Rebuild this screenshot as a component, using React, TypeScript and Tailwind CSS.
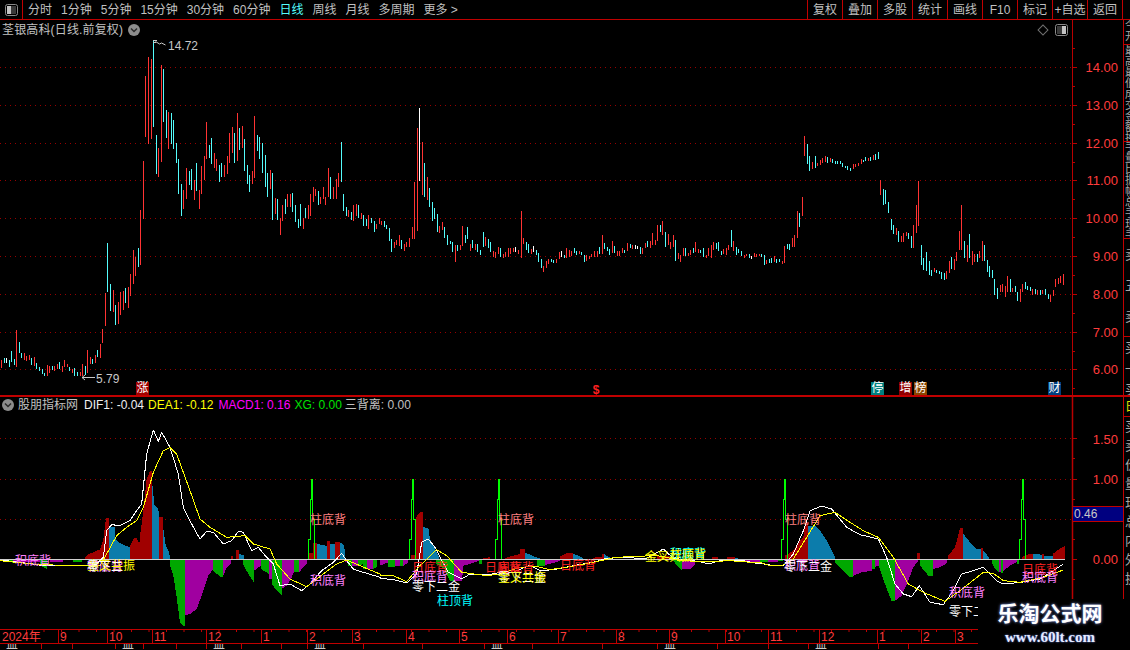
import clsx from 'clsx';

const RED = '#ff3333';
const CYAN = '#54fcfc';
const AXIS = '#b80000';

// candles read off the chart: "x:top-bottom colour", in crop units, with the crop's origin
const candleTables: [number, number, string][] = [
  [0, 130, `3:690-715r 12:685-700c 18:685-700w 27:690-710c 33:663-695c 42:688-705c 48:600-710r 57:636-670c 63:670-685c 72:670-690r 78:678-692r 87:675-690r 93:683-705c 102:682-708r 108:700-716c 117:712-722c 126:718-733c 132:728-738c 141:705-738r 147:708-730r 156:708-720c 162:708-722r 171:702-718r 177:697-718c 186:708-726r 192:690-712r 201:702-712r 207:710-722c 216:716-730r 222:714-738c 231:726-738c 240:726-738r 246:702-738r 255:708-735c 261:660-728r 270:682-702r 276:686-702c 285:675-700r 291:660-682c 300:642-684r 306:598-640r 315:490-588r 321:340-486c 330:462-544c 339:480-545r 345:525-585c 354:515-582r 360:486-555r 369:484-540r 375:474-520c 384:472-534r 390:432-498r 399:360-462r 405:380-438r 414:355-410c 420:240-405r`],
  [130, 35, `40:378-552r 46:123-305r 55:66-327r 64:72-312r 70:15-275c 79:300-417c 85:340-425r 94:90-380r 100:102-260c 109:225-308c 115:232-342r 124:234-327c 130:255-342c 139:324-384c 145:372-477c 154:447-543c 160:465-522r 169:400-492r 178:408-450c 184:402-465c 193:435-495r 199:384-468c 208:465-522r 214:393-477r 223:363-435r 229:261-372r 238:330-370c 244:309-387c 253:354-399r 259:372-408r 268:390-441c 274:384-426c 283:390-426r 292:363-417r 298:294-384r 307:276-354r 313:294-384c 322:234-378r 328:279-345c 337:273-339r 343:312-408c 352:390-447c 358:420-471c 367:408-447r 373:243-429r 382:300-348c 388:306-372c`],
  [250, 105, `37:114-204c 46:150-246c 52:204-276c 61:195-252r 67:204-345c 76:279-327r 82:282-345c 91:339-390r 97:300-348r 106:282-327c 112:267-306r 121:267-306r 127:264-321c 136:300-351c 145:342-369c 151:297-363c 160:339-372r 166:309-339c 175:300-342r 181:267-333r 190:246-291r 196:252-273r 205:258-300c 211:276-297r 220:246-282r 226:276-300r 235:189-276r 241:216-282c 250:246-282r 259:222-282r 265:204-246r 274:111-231c 280:267-318c 289:306-333c 295:315-336r 304:321-345c 310:300-348r 319:297-333r 325:300-339c 334:324-342r 340:330-363c 349:342-363c 355:330-372r 364:339-354c 373:348-381c 379:357-372r 388:339-357r`],
  [380, 100, `3:363-375r 12:363-381c 18:375-387c 27:384-423c 33:417-456c 42:426-444r 48:420-435r 57:405-438r 63:420-447c 72:432-453r 78:426-441r 87:414-441r 96:381-417r 102:246-417r 111:84-393r 117:24-243w 126:126-285r 132:189-291c 141:231-300r 147:264-321c 156:306-363c 162:324-357c 171:342-396c 177:378-399r 186:366-390r 192:381-414c 201:405-435c 210:423-432c 216:426-456c 225:435-486r 231:435-453c 240:435-450r 246:378-438r 255:405-429c 261:381-417c 270:432-453r 276:420-444c 285:432-450r 291:432-456c 300:450-465c 309:396-441c 315:411-438r 324:417-444c 330:426-456c 339:453-471r 345:456-474r 354:441-462r 360:444-471c 369:462-474r 375:456-471r 384:444-471r 390:444-462r 399:444-456r 405:441-456w 414:450-462r 423:333-474r 430:414-432r 438:426-450c 444:432-459c 453:447-462r 459:438-456w 468:450-465c 474:459-486c 483:477-504c 489:498-516r 498:483-504r 504:477-492r 513:477-486c 519:480-489c 528:477-489r 537:456-477r 543:453-471w 552:465-474c 558:444-474r 567:450-471r 573:453-468r 582:444-459c 588:453-465c 597:453-462r 603:456-465c 612:465-486c 618:465-483r 627:468-477r 633:462-471r 642:453-471r 651:453-471r 657:441-462c 666:405-462r 672:429-447c 681:441-453c 687:447-465c 696:423-459r 702:438-459c 711:453-468r 717:453-468r 726:444-459r 732:450-459c 741:429-453r 750:432-444c 757:435-447r 766:435-447w 771:438-447w 780:441-462c 786:444-462r 795:429-444r 801:423-441c 810:423-444r 816:399-435r 825:420-435r 831:375-423r 840:375-396c 846:363-405r 855:396-441c 864:402-435r 870:426-447r 879:405-441r 885:420-483c 894:459-477r 900:465-486r 909:444-468r 915:444-468c 924:459-468r 930:450-465r 939:444-459c 945:426-456r 954:447-459r 960:450-459c 969:444-471c 978:465-474r 984:444-468r 993:435-474r 999:426-450r 1008:429-447c 1014:426-453c 1023:453-465c 1029:447-462r 1038:444-465r 1044:435-450r 1053:390-441c 1059:423-453r 1068:441-465c 1074:447-459c 1083:453-468c 1092:465-474r 1098:462-468r 1107:462-474c 1113:468-477w 1122:459-471r 1128:462-471r 1137:462-468r`],
  [760, 120, `3:402-411c 12:405-435c 18:420-432r 27:417-429c 33:414-429c 42:408-426r 48:417-429c 57:417-426c 66:423-432r 72:378-429r 81:372-387c 87:372-390c 96:354-381r 102:345-381r 111:273-354r 117:279-321c 126:231-288r 133:48-108r 141:72-132c 147:108-153c 156:126-147r 165:108-144c 171:129-138r 180:120-135r 186:114-129r 195:108-126r 201:111-129c 210:114-126r 216:117-129c 225:123-132c 231:123-132c 240:123-132c 246:129-141c 255:138-144c 261:138-150c 270:144-153c 279:132-147r 285:132-141r 294:129-138r 303:117-132r 309:120-126c 315:111-123c 324:114-123r 330:111-123c 339:105-120r 345:102-120c 354:96-117c 361:180-225r 370:207-255c 376:210-252c 385:246-279c 394:297-330c 400:315-342c 409:324-345r 415:333-366c 424:348-366r 430:339-366r 439:336-348r 445:339-357c 454:348-384c 460:315-384r 469:255-339r 475:183-318r 484:375-435c 490:414-450c 499:396-453c 508:423-465c 514:450-468c 523:444-456r 529:450-459c 538:453-462c 544:456-477c 553:459-480c 559:453-477r 568:423-459r 574:411-447c 583:417-450r 589:396-423r 598:333-390r 604:255-390r 613:363-414c 622:375-426r 628:342-414c 637:393-435r 643:402-426r 652:402-426c 658:393-414r 667:363-423r 673:375-423c 682:420-456c 688:438-471c 697:450-474c 703:477-525c 712:504-537c 721:495-516r 727:492-516r 736:498-531r 742:468-516r 751:477-516c 757:504-516r 766:498-516c 772:516-543c 781:507-546r 787:492-516r 796:486-507c 802:498-510c 811:501-513c 817:507-525r 826:507-522c 832:510-525r 841:510-525c 847:510-522r 856:507-525c 865:522-537c 871:525-546r 880:510-528r 886:477-501r 895:474-492r 901:468-489r 910:462-495r`],
];

const candles = candleTables.flatMap(([ox, oy, table]) =>
  table.split(' ').map((item) => {
    const m = item.match(/(\d+):(\d+)-(\d+)(\w)/)!;
    return {
      x: ox + Math.floor(Number(m[1]) / 3),
      top: oy + Number(m[2]) / 3,
      bottom: oy + Number(m[3]) / 3,
      color: m[4] === 'r' ? RED : m[4] === 'c' ? CYAN : '#ffffff',
    };
  })
);

const priceTicks = [
  { y: 67, label: '14.00' },
  { y: 105, label: '13.00' },
  { y: 143, label: '12.00' },
  { y: 180, label: '11.00' },
  { y: 218, label: '10.00' },
  { y: 256, label: '9.00' },
  { y: 294, label: '8.00' },
  { y: 332, label: '7.00' },
  { y: 369, label: '6.00' },
];

const badges = [
  { x: 136, text: '涨', bg: 'bg-[#a00000]' },
  { x: 871, text: '停', bg: 'bg-[#008080]' },
  { x: 899, text: '增', bg: 'bg-[#900000]' },
  { x: 914, text: '榜', bg: 'bg-[#8a4500]' },
  { x: 1048, text: '财', bg: 'bg-[#003f7f]' },
];

const ZERO = 560.5;
const GREEN = '#00a800';
const PURPLE = '#a000a0';
const DARKRED = '#a00000';
const BLUE = '#0c7cab';

// each histogram run: colour, then outline points in crop units (closed back to the zero line)
const histogram: [number, number, [string, string][]][] = [
  [0, 395, [
    [GREEN, '15,503 40,506'], [PURPLE, '40,505 120,505'], [GREEN, '120,515 140,525'], [PURPLE, '150,505 190,503'], [GREEN, '220,503 245,505'],
    [DARKRED, '255,490 265,480 285,473 300,466 310,435 318,373 328,373'],
    [BLUE, '328,400 345,400 346,435 360,447 375,455 390,460'],
    [DARKRED, '390,455 402,432 412,432 413,445 420,445'],
    [DARKRED, '420,427 430,350 440,255 450,232 456,232'],
    [BLUE, '456,262 463,332 470,338 478,355'],
    [DARKRED, '478,370 490,370 490,405'],
    [BLUE, '490,405 497,452 505,470 510,490'],
    [GREEN, '510,515 520,545 530,610 540,685 550,695 555,695'],
    [PURPLE, '555,665 570,660 590,645 605,605 615,575 625,545 640,525'],
    [GREEN, '640,530 660,548 670,550'],
    [PURPLE, '670,545 680,520 692,510'],
    [DARKRED, '692,485 700,485'],
    [DARKRED, '708,468 716,468'],
    [BLUE, '716,480 732,484'],
    [GREEN, '730,512 745,540 762,565'],
    [PURPLE, '762,530 783,515'],
    [GREEN, '783,525 807,540'],
    [PURPLE, '807,555 815,555'],
    [GREEN, '815,570 830,590 845,603'],
    [PURPLE, '845,585 860,575 870,560 882,535'],
    [GREEN, '882,535 897,535'],
    [PURPLE, '897,535 910,520 920,510'],
    [DARKRED, '925,478 938,478'],
    [DARKRED, '940,447 950,447'],
    [BLUE, '950,450 965,452 980,456'],
    [DARKRED, '980,440 990,440'],
    [BLUE, '990,450 1005,450'],
    [DARKRED, '1005,445 1020,445'],
    [BLUE, '1020,447 1030,450 1035,470'],
    [PURPLE, '1035,505 1045,505'], [GREEN, '1045,515 1055,515'], [PURPLE, '1055,515 1073,515'], [GREEN, '1073,515 1090,510'], [GREEN, '1090,525 1100,525'], [PURPLE, '1100,525 1120,525'], [GREEN, '1120,525 1130,520'],
  ]],
  [380, 460, [
    [PURPLE, '0,320 25,310'], [GREEN, '25,325 45,325'], [PURPLE, '45,320 60,320'], [GREEN, '60,322 70,320'], [PURPLE, '70,320 85,310'],
    [DARKRED, '93,288 108,288'],
    [DARKRED, '108,175 120,160 130,160'],
    [BLUE, '130,205 145,207 150,240 165,270 178,295'],
    [GREEN, '168,315 195,330'],
    [GREEN, '195,335 210,365 222,365'],
    [PURPLE, '222,365 245,365 250,330'],
    [PURPLE, '250,320 270,315 297,305'], [GREEN, '297,315 305,315'],
    [DARKRED, '310,297 330,295'],
    [DARKRED, '375,297 400,290 420,285'], [DARKRED, '420,270 435,270'],
    [BLUE, '435,280 460,292 480,298'],
    [GREEN, '470,320 495,320'], [PURPLE, '495,318 520,312 540,306'],
    [DARKRED, '540,292 560,283 580,282'], [BLUE, '580,285 600,292 610,298'],
    [DARKRED, '640,296 665,293'], [DARKRED, '665,285 672,285'], [BLUE, '672,285 690,296'],
    [DARKRED, '830,292 870,292'],
    [GREEN, '880,305 890,320 905,335'], [PURPLE, '905,330 930,330 945,315'],
    [DARKRED, '995,295 1015,295'], [DARKRED, '1040,295 1065,295'],
    [BLUE, '1065,297 1075,298'],
    [PURPLE, '1085,308 1140,308'],
  ]],
  [760, 395, [
    [GREEN, '0,505 25,505'], [PURPLE, '25,505 55,505'], [GREEN, '55,502 70,500'],
    [DARKRED, '75,485 100,470 120,440 130,430 135,390 143,385'],
    [BLUE, '143,395 165,395 180,410 200,440 215,470 225,490'],
    [GREEN, '225,505 250,530 268,548 280,548'],
    [PURPLE, '280,545 305,535 335,530'],
    [GREEN, '335,525 345,525'], [PURPLE, '345,518 358,515'],
    [GREEN, '358,520 375,570 395,622 405,622'],
    [PURPLE, '405,620 425,605 445,560 460,520 475,500'],
    [DARKRED, '471,477 480,477'],
    [GREEN, '480,515 505,545 520,545'],
    [PURPLE, '520,525 540,520 560,508'],
    [DARKRED, '565,485 585,460 600,403 610,403'],
    [BLUE, '610,420 630,445 650,465 662,465'],
    [DARKRED, '662,463 670,463'], [BLUE, '670,470 687,490'],
    [GREEN, '695,505 705,525 718,535'], [GREEN, '722,537 730,537'], [PURPLE, '718,535 722,535'], [PURPLE, '730,530 750,515 770,505'], [GREEN, '770,512 777,510'],
    [DARKRED, '785,490 800,482 820,480'], [BLUE, '820,480 845,482'], [DARKRED, '845,480 852,480'], [BLUE, '852,485 878,487'],
    [DARKRED, '878,480 895,467 915,456'],
  ]],
];

const histPolys = histogram.flatMap(([ox, oy, runs]) =>
  runs.map(([color, raw]) => {
    const pts = raw.split(' ').map((p) => {
      const [a, b] = p.split(',').map(Number);
      return [ox + a / 3, oy + b / 3];
    });
    const outline = [[pts[0][0], ZERO], ...pts, [pts[pts.length - 1][0], ZERO]];
    return { color, points: outline.map((p) => p.join(',')).join(' ') };
  })
);

function toLine(parts: [number, number, string][]) {
  return parts
    .map(([ox, oy, raw]) =>
      raw
        .split(' ')
        .map((p) => {
          const [a, b] = p.split(',').map(Number);
          return `${ox + a / 3},${oy + b / 3}`;
        })
        .join(' ')
    )
    .join(' ');
}

const difLine = toLine([
  [0, 395, '0,498 60,505 100,510 130,515 190,515 250,515 290,510 310,490 320,410 335,392 360,395 390,380 410,350 425,330 440,180 460,108 475,142 485,115 510,160 535,240 550,340 575,390 600,435 620,412 640,415 670,450 695,440 715,412 730,415 755,470 775,460 800,490 820,510 840,575 870,570 905,590 930,570 965,530 1000,505 1025,478 1040,500 1060,525 1090,535 1140,550'],
  [380, 460, '0,358 40,362 80,372 110,345 125,250 145,240 165,265 180,295 205,340 245,360 270,345 320,348 360,340 400,340 450,318 480,335 520,332 590,318 640,310 680,298 720,296 800,298 850,270 880,298 960,308 985,315 1020,305 1090,305 1140,315'],
  [760, 395, '0,508 40,515 70,515 100,480 130,410 150,350 185,336 215,345 260,400 300,422 355,435 380,490 405,570 430,600 455,608 478,575 510,625 550,632 580,590 605,540 640,530 670,520 710,560 730,570 785,565 840,555 880,530 910,510'],
]);

const deaLine = toLine([
  [0, 395, '0,500 100,510 160,513 240,514 300,515 320,480 350,425 380,400 410,380 430,340 460,235 490,170 510,160 530,180 570,290 600,375 630,400 680,430 735,425 760,450 810,465 830,510 870,555 920,578 970,540 1010,510 1040,498 1080,515 1140,540'],
  [380, 460, '0,348 40,350 80,368 120,320 170,272 200,290 245,340 320,350 360,345 420,325 470,322 510,332 590,320 650,308 700,296 760,292 830,290 860,295 900,305 990,308 1050,305 1140,312'],
  [760, 395, '0,505 30,515 70,513 100,495 140,430 180,365 225,355 270,385 310,410 355,430 400,490 445,570 490,595 555,622 600,590 670,535 700,538 730,560 780,565 850,550 910,528'],
]);

const xgSpikes = [311, 412, 498, 784, 1022];

const signals = [
  { x: 15, y: 561, text: '积底背', color: '#ff80ff' },
  { x: 87, y: 567, text: '积底背', color: '#ff80ff' },
  { x: 87, y: 566, text: '金叉共振', color: '#ffff00' },
  { x: 87, y: 567, text: '零下二', color: '#ffffff' },
  { x: 310, y: 520, text: '柱底背', color: '#ff8080' },
  { x: 498, y: 520, text: '柱底背', color: '#ff8080' },
  { x: 785, y: 520, text: '柱底背', color: '#ff8080' },
  { x: 310, y: 581, text: '积底背', color: '#ff80ff' },
  { x: 412, y: 568, text: '日底背', color: '#ff2020' },
  { x: 412, y: 577, text: '积底背', color: '#ff80ff' },
  { x: 412, y: 587, text: '零下二金', color: '#ffffff' },
  { x: 437, y: 601, text: '柱顶背', color: '#00ffff' },
  { x: 485, y: 568, text: '日底背', color: '#ff2020' },
  { x: 498, y: 568, text: '周底背', color: '#ff2020' },
  { x: 498, y: 578, text: '零下二金', color: '#ffffff' },
  { x: 498, y: 578, text: '金叉共振', color: '#ffff00' },
  { x: 560, y: 566, text: '日底背', color: '#ff2020' },
  { x: 645, y: 557, text: '金叉共振', color: '#ffff00' },
  { x: 670, y: 554, text: '积底背', color: '#00ffff' },
  { x: 670, y: 555, text: '柱顶背', color: '#ffff00' },
  { x: 784, y: 566, text: '积底背', color: '#ff80ff' },
  { x: 784, y: 567, text: '零下二金', color: '#ffffff' },
  { x: 949, y: 593, text: '积底背', color: '#ff80ff' },
  { x: 949, y: 612, text: '零下二金', color: '#ffffff' },
  { x: 1022, y: 570, text: '日底背', color: '#ff2020' },
  { x: 1022, y: 578, text: '积底背', color: '#ff80ff' },
];

const months = [
  { x: 58, label: '9' },
  { x: 107, label: '10' },
  { x: 152, label: '11' },
  { x: 206, label: '12' },
  { x: 261, label: '1' },
  { x: 307, label: '2' },
  { x: 352, label: '3' },
  { x: 406, label: '4' },
  { x: 459, label: '5' },
  { x: 507, label: '6' },
  { x: 558, label: '7' },
  { x: 616, label: '8' },
  { x: 669, label: '9' },
  { x: 725, label: '10' },
  { x: 768, label: '11' },
  { x: 819, label: '12' },
  { x: 877, label: '1' },
  { x: 921, label: '2' },
  { x: 955, label: '3' },
];

const bottomCells = [42, 31, 43, 28, 33, 30, 35, 40, 26, 56, 59, 62, 48, 70, 55, 60, 51, 40, 70, 30];

const timeframes = ['分时', '1分钟', '5分钟', '15分钟', '30分钟', '60分钟', '日线', '周线', '月线', '多周期', '更多 >'];
const actions = ['复权', '叠加', '多股', '统计', '画线', 'F10', '标记', '+自选', '返回'];

const stripTop = '今开最高最低成交金额换手量比振幅总手现手外盘内盘均价涨停跌停市盈'.split('');
const stripMid = '卖五卖四卖三'.split('');
const stripLow = '买一买二'.split('');

function SideIcon({ side }: { side: 'left' | 'right' }) {
  return (
    <svg width="13" height="12" viewBox="0 0 13 12" className="block">
      <rect x="0.5" y="0.5" width="12" height="11" rx="2" fill="#000" stroke="#8a8a8a" />
      <rect x={side === 'left' ? 2 : 7} y="2" width="4" height="8" fill="#c4c4c4" />
      <rect x={side === 'left' ? 6 : 2} y="2" width="5" height="8" fill="#3a3a3a" />
    </svg>
  );
}

function ChevronDot() {
  return (
    <svg width="12" height="12" viewBox="0 0 12 12" className="block shrink-0">
      <circle cx="6" cy="6" r="6" fill="#8c8c8c" />
      <path d="M3 4.5 L6 7.5 L9 4.5" fill="none" stroke="#2a2a2a" strokeWidth="1.5" />
    </svg>
  );
}

function DottedGrid({ ys }: { ys: number[] }) {
  return (
    <g>
      {ys.map((y) => (
        <line key={y} x1="0" x2="1072" y1={y + 0.5} y2={y + 0.5} stroke="#960000" strokeDasharray="1 4" shapeRendering="crispEdges" />
      ))}
    </g>
  );
}

function PricePanel() {
  const minor = priceTicks.map((t) => t.y + 19);
  return (
    <div className="relative h-[377px] border-b-2 border-[#c00000]">
      <svg width="1123" height="375" viewBox="0 20 1123 375" className="block">
        <DottedGrid ys={priceTicks.map((t) => t.y)} />
        {candles.map((c, i) => (
          <rect key={i} x={c.x} y={c.top} width="1" height={c.bottom - c.top} fill={c.color} shapeRendering="crispEdges" />
        ))}
        <line x1="1072.5" x2="1072.5" y1="20" y2="396" stroke={AXIS} />
        {priceTicks.map((t) => (
          <g key={t.label}>
            <line x1="1072" x2="1077" y1={t.y + 0.5} y2={t.y + 0.5} stroke={AXIS} />
            <text x="1118" y={t.y + 4.5} textAnchor="end" fontSize="13" fill="#ff3c3c">{t.label}</text>
          </g>
        ))}
        {minor.map((y) => (
          <line key={y} x1="1072" x2="1075" y1={y + 0.5} y2={y + 0.5} stroke={AXIS} />
        ))}
        <line x1="1072" x2="1075" y1="48.5" y2="48.5" stroke={AXIS} />
        {/* high and low markers */}
        <path d="M153 40.5 h4 M153 42.5 h3 M155.5 41.5 l4 2.5 l2 -1 l4 2" fill="none" stroke="#c8c8c8" />
        <text x="168" y="50" fontSize="12" fill="#c8c8c8">14.72</text>
        <path d="M95 377.5 h-13 M85 375 l-3 2.5 l3 2.5" fill="none" stroke="#c8c8c8" />
        <text x="96" y="383" fontSize="12" fill="#c8c8c8">5.79</text>
        <text x="596" y="394" textAnchor="middle" fontSize="12" fontWeight="700" fill="#ff2020">$</text>
      </svg>

      <div className="absolute left-[2px] top-[3px] flex items-center gap-[5px] text-[12px] leading-[14px] tracking-[0.15px] text-[#c0c0c0]">
        <span>荃银高科(日线.前复权)</span>
        <ChevronDot />
      </div>
      <div className="absolute left-[1039px] top-[4px] flex items-center gap-[8px]">
        <span className="block h-[8px] w-[8px] rotate-45 border border-[#707070]" />
        <SideIcon side="right" />
      </div>
      {badges.map((b) => (
        <span
          key={b.x}
          style={{ left: b.x }}
          className={clsx('absolute top-[362px] h-[13px] w-[13px] text-center text-[12px] leading-[13px] text-white', b.bg)}
        >
          {b.text}
        </span>
      ))}
    </div>
  );
}

function IndicatorPanel() {
  return (
    <div className="relative h-[232px]">
      <svg width="1123" height="232" viewBox="0 398 1123 232" className="block">
        <DottedGrid ys={[439, 480, 520]} />
        {histPolys.map((p, i) => (
          <polygon key={i} points={p.points} fill={p.color} shapeRendering="crispEdges" />
        ))}
        <line x1="0" x2="1065" y1="560.5" y2="560.5" stroke="#d0d0d0" shapeRendering="crispEdges" />
        {xgSpikes.map((x) => (
          <polyline
            key={x}
            points={`${x - 2.5},560 ${x - 2.5},540 ${x - 0.5},540 ${x - 0.5},500 ${x + 0.5},500 ${x + 0.5},480 ${x + 1.5},480 ${x + 1.5},520 ${x + 3.5},520 ${x + 3.5},560`}
            fill="none"
            stroke="#00ff00"
            shapeRendering="crispEdges"
          />
        ))}
        <polyline points={difLine} fill="none" stroke="#ffffff" strokeLinejoin="bevel" shapeRendering="crispEdges" />
        <polyline points={deaLine} fill="none" stroke="#ffff00" strokeLinejoin="bevel" shapeRendering="crispEdges" />
        {signals.map((s, i) => (
          <text key={i} x={s.x} y={s.y + 4.5} fontSize="12" fill={s.color}>{s.text}</text>
        ))}
        <line x1="1072.5" x2="1072.5" y1="398" y2="630" stroke={AXIS} strokeWidth="1.5" />
        {[439, 480, 520, 560].map((y) => (
          <line key={y} x1="1072" x2="1077" y1={y + 0.5} y2={y + 0.5} stroke={AXIS} />
        ))}
        {[459, 500, 540, 580].map((y) => (
          <line key={y} x1="1072" x2="1075" y1={y + 0.5} y2={y + 0.5} stroke={AXIS} />
        ))}
        <text x="1118" y="444.5" textAnchor="end" fontSize="13" fill="#ff3c3c">1.50</text>
        <text x="1118" y="485" textAnchor="end" fontSize="13" fill="#ff3c3c">1.00</text>
        <text x="1118" y="565" textAnchor="end" fontSize="13" fill="#ff3c3c">0.00</text>
      </svg>

      <div className="absolute left-[2px] top-[1px] flex h-[14px] items-center whitespace-nowrap text-[12px] leading-[14px] text-[#c0c0c0]">
        <ChevronDot />
        <span className="ml-[4px]">股朋指标网</span>
        <span className="ml-[6px] text-[#f0f0f0]">DIF1: -0.04</span>
        <span className="ml-[4px] text-[#ffff00]">DEA1: -0.12</span>
        <span className="ml-[5px] text-[#ff00ff]">MACD1: 0.16</span>
        <span className="ml-[4px] text-[#00e000]">XG: 0.00</span>
        <span className="ml-[3px]">三背离: 0.00</span>
      </div>
      <div className="absolute left-[1073px] top-[109px] h-[16px] w-[50px] border-y border-[#c00000] bg-[#000080] pl-[1px] text-[12px] leading-[14px] text-[#c8c8c8]">
        0.46
      </div>
    </div>
  );
}

function DateAxis() {
  return (
    <div className="relative h-[15px] border-y border-[#c00000]">
      <span className="absolute left-[2px] top-0 text-[12px] leading-[14px] text-[#ff3c3c]">2024年</span>
      {months.map((m) => (
        <span
          key={m.x}
          style={{ left: m.x }}
          className="absolute top-0 h-[13px] border-l border-[#c00000] pl-[1px] text-[12px] leading-[14px] text-[#ff3c3c]"
        >
          {m.label}
        </span>
      ))}
      <svg width="978" height="3" className="absolute left-0 top-0 block">
        {Array.from({ length: 55 }, (_, i) => (
          <line key={i} x1={26.5 + i * 17.5} x2={26.5 + i * 17.5} y1="0" y2="2" stroke="#c00000" />
        ))}
      </svg>
    </div>
  );
}

function BottomRow() {
  return (
    <div className="flex h-[5px] overflow-hidden">
      {bottomCells.map((w, i) => (
        <div key={i} style={{ width: w }} className="shrink-0 border-r border-[#c00000] pl-[6px] text-[12px] leading-[12px] text-[#c8c8c8]">
          {i % 3 === 0 ? '卌' : ''}
        </div>
      ))}
    </div>
  );
}

function RightStrip() {
  return (
    <div className="flex w-[7px] shrink-0 flex-col overflow-hidden border-l border-[#c00000] text-[11px] leading-[11px] text-[#a8a8a8]">
      <div className="h-[25px] shrink-0 overflow-hidden border-b border-[#c00000] pl-[1px]">
        {stripTop.slice(0, 2).map((ch, i) => (
          <div key={i}>{ch}</div>
        ))}
      </div>
      <div className="h-[97px] shrink-0 overflow-hidden border-b border-[#c00000] pl-[1px]">
        {stripTop.slice(2, 11).map((ch, i) => (
          <div key={i}>{ch}</div>
        ))}
      </div>
      <div className="h-[97px] shrink-0 overflow-hidden border-b border-[#c00000] pl-[1px]">
        {stripTop.slice(11, 20).map((ch, i) => (
          <div key={i}>{ch}</div>
        ))}
      </div>
      <div className="h-[98px] shrink-0 overflow-hidden border-b border-[#c00000] pl-[1px] text-[13px] leading-[31px]">
        {stripMid.slice(0, 3).map((ch, i) => (
          <div key={i}>{ch}</div>
        ))}
      </div>
      <div className="h-[60px] shrink-0 overflow-hidden border-b-2 border-[#c00000] pl-[1px] text-[13px] leading-[21px]">
        {stripLow.slice(0, 3).map((ch, i) => (
          <div key={i}>{ch}</div>
        ))}
      </div>
      <div className="h-[20px] shrink-0 overflow-hidden border-b border-[#c00000] pl-[1px] text-[12px] leading-[20px] text-[#e0e000]">日</div>
      <div className="flex-1 overflow-hidden pl-[1px] text-[13px] leading-[19px]">
        {'买卖价量现总内外换'.split('').map((ch, i) => (
          <div key={i}>{ch}</div>
        ))}
      </div>
    </div>
  );
}

export default function App() {
  return (
    <div className="relative flex h-[650px] w-[1130px] flex-col overflow-hidden bg-black font-['Liberation_Sans','Noto_Sans_CJK_SC',sans-serif] text-[12px] text-[#c0c0c0]">
      <div className="flex h-[20px] shrink-0 items-stretch border-b border-[#c00000]">
        <div className="flex w-[23px] items-center justify-center border-r border-[#c00000]">
          <SideIcon side="left" />
        </div>
        <div className="flex flex-1 items-center gap-[9px] pl-[5px]">
          {timeframes.map((t) => (
            <span key={t} className={clsx('whitespace-nowrap', t === '日线' && 'text-[#54fcfc]')}>
              {t}
            </span>
          ))}
        </div>
        {actions.map((a) => (
          <div key={a} className="flex w-[35px] items-center justify-center whitespace-nowrap border-l border-[#c00000]">
            {a}
          </div>
        ))}
        <div className="w-[8px] border-l border-[#c00000]" />
      </div>

      <div className="flex flex-1">
        <div className="flex w-[1123px] flex-col">
          <PricePanel />
          <IndicatorPanel />
          <DateAxis />
          <BottomRow />
        </div>
        <RightStrip />
      </div>

      {/* site watermark pasted over the corner */}
      <div className="absolute bottom-0 right-0 flex h-[51px] w-[152px] flex-col items-center bg-black pr-[8px]">
        <span className="mt-[1px] text-[21px] font-bold leading-[27px] text-white [text-shadow:0_0_3px_#8fa8ff]">乐淘公式网</span>
        <span className="mt-[2px] font-['Liberation_Serif',serif] text-[15px] font-bold leading-[16px] text-[#e6ecff] [text-shadow:0_0_2px_#6f8fff]">www.60lt.com</span>
      </div>
    </div>
  );
}
